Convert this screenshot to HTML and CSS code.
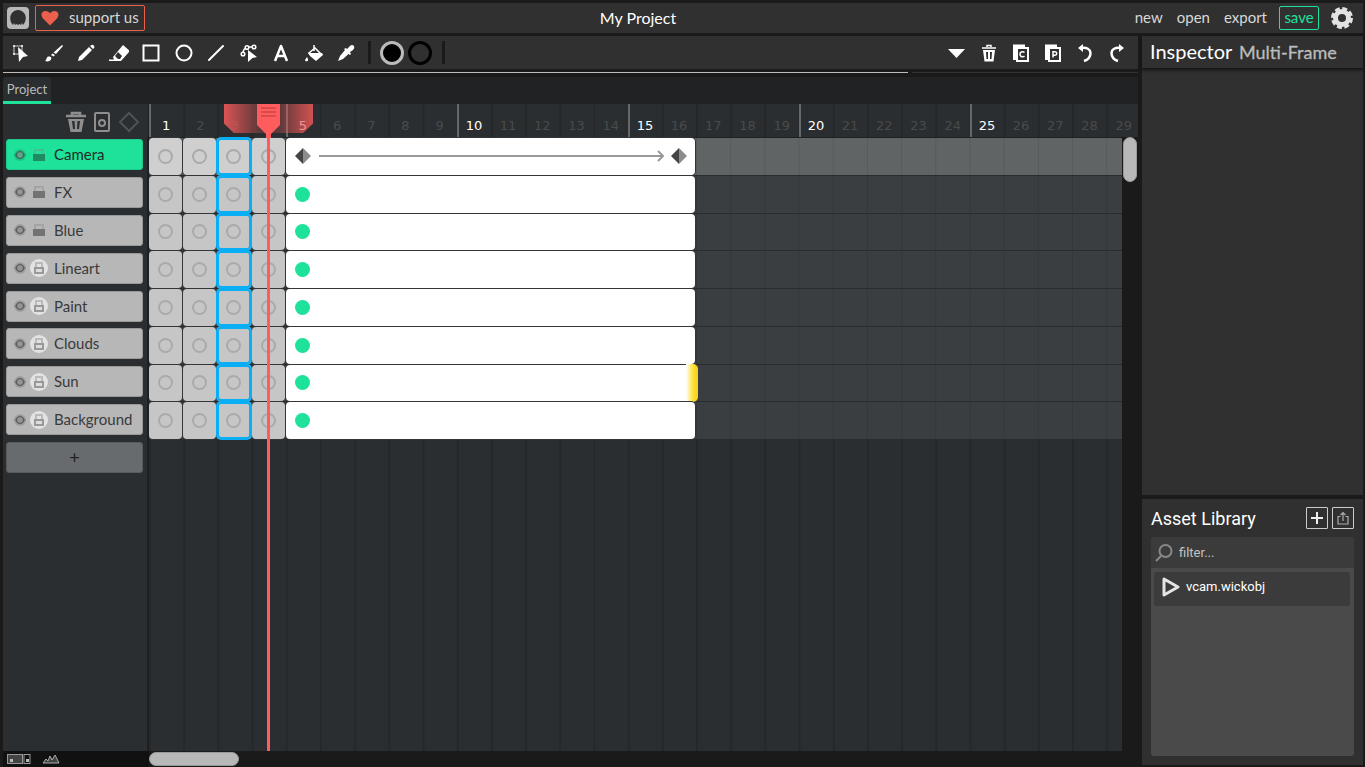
FILE: index.html
```html
<!DOCTYPE html>
<html lang="en">

<head>
  <meta charset="UTF-8">
  <title>My Project</title>
  <link rel="stylesheet" href="styles.css">
</head>

<body>

  <header class="menubar">
    <button class="logo" aria-label="about">
      <svg width="22" height="22" viewBox="0 0 22 22"><rect width="22" height="22" rx="4" fill="#b8b8b8"/><path d="M6 18C2 14 3 8 5 6C8 2 14 2 17 6C20 9 19 15 16 18L15 16L14 18L12.500 17L11 18L9.500 17L8 18L7 16Z" fill="#303030"/></svg>
    </button>
    <button class="support">
      <svg width="18" height="16" viewBox="0 0 18 16"><path d="M9 15.500L2 8.500C-1 4 1 1 4.500 1C7 1 8 2 9 3.500C10 2 11 1 13.500 1C17 1 19 4 16 8.500Z" fill="#ec5f4c"/></svg>
      <span>support us</span>
    </button>
    <h1 class="project-name">My Project</h1>
    <nav class="menu-right">
      <button>new</button>
      <button>open</button>
      <button>export</button>
      <button class="save">save</button>
      <button class="settings" aria-label="settings">
        <svg width="22" height="22" viewBox="0 0 22 22"><circle cx="11" cy="11" r="6.500" fill="none" stroke="#e2e2e2" stroke-width="5"/><circle cx="11" cy="11" r="9" fill="none" stroke="#e2e2e2" stroke-width="4" stroke-dasharray="4.700 2.370"/></svg>
      </button>
    </nav>
  </header>

  <div class="workspace">
    <main class="editor">

      <div class="toolbar">
        <div class="tools">
          <button aria-label="cursor"><svg viewBox="0 0 20 20"><path d="M3 3H11V11H3Z" fill="none" stroke="#999" stroke-width="1.500"/><path d="M2 2h2v2H2zM10 2h2v2h-2zM2 10h2v2H2z" fill="#ddd"/><path d="M7 4L17 13L12 14L8 19Z" fill="#fff"/></svg></button>
          <button aria-label="brush"><svg viewBox="0 0 20 20"><path d="M18 2L19 3L12 11L9.500 9.500ZM8.500 10.500L11 12L9.500 13.500L7 12ZM1 18C3 17 2 14 4.500 13.500C7 13 8 15 7 16.500C6 18.500 3 19 1 18Z" fill="#fff"/></svg></button>
          <button aria-label="pencil"><svg viewBox="0 0 20 20"><path d="M2 18L3 14L13 4L16 7L6 17ZM14 3L15.500 2Q17 1 18 3Q19 4 18 5L17 6Z" fill="#fff"/></svg></button>
          <button aria-label="eraser"><svg viewBox="0 0 20 20"><path d="M14 2L21 8L12 18H0V16.500H5L4 14ZM9 9L6 13L9 16H11L13 13Z" fill="#fff" fill-rule="evenodd"/></svg></button>
          <button aria-label="rectangle"><svg viewBox="0 0 20 20"><rect x="2.500" y="2.500" width="15" height="15" fill="none" stroke="#fff" stroke-width="2"/></svg></button>
          <button aria-label="ellipse"><svg viewBox="0 0 20 20"><circle cx="10" cy="10" r="7.500" fill="none" stroke="#fff" stroke-width="2"/></svg></button>
          <button aria-label="line"><svg viewBox="0 0 20 20"><path d="M3 17L17 3" stroke="#fff" stroke-width="2" stroke-linecap="round"/></svg></button>
          <button aria-label="path cursor"><svg viewBox="0 0 20 20"><path d="M4 11Q4 5 8 5M8 4H16" fill="none" stroke="#fff" stroke-width="1.500"/><g fill="#303030" stroke="#fff" stroke-width="1.500"><circle cx="4" cy="11" r="1.800"/><circle cx="8" cy="4.500" r="1.800"/><circle cx="15" cy="4" r="1.800"/></g><path d="M9 7L18 14L13.500 15L9 19Z" fill="#fff"/></svg></button>
          <button aria-label="text"><svg viewBox="0 0 20 20"><path d="M4 18L10 3L16 18M6 13H14" fill="none" stroke="#fff" stroke-width="2.500" stroke-linejoin="round"/></svg></button>
          <button aria-label="fill bucket"><svg viewBox="0 0 20 20"><path d="M10 2V8M11 5L17 11L12 16L5 10Z" fill="none" stroke="#fff" stroke-width="1.500"/><path d="M4 10L18 10L19 12L12 18L6 13ZM3 14Q5 17 3.500 18Q1 19 1 17Z" fill="#fff"/></svg></button>
          <button aria-label="eyedropper"><svg viewBox="0 0 20 20"><path d="M2 18L4 13L9 7L8 6L10 5L11 6L14 3Q16 1 18 3Q19 5 17 7L14 9L15 11L14 12L12.500 11L7 16Z" fill="#fff"/></svg></button>
        </div>
        <span class="divider"></span>
        <button class="swatch fill" aria-label="fill color"></button>
        <button class="swatch" aria-label="stroke color"></button>
        <span class="divider last"></span>
        <div class="actions">
          <button aria-label="more"><svg viewBox="0 0 20 20"><path d="M1 6H18L9.500 15Z" fill="#fff"/></svg></button>
          <button aria-label="delete"><svg viewBox="0 0 20 20"><path d="M3 5H17M8 4V2.500H12V4" fill="none" stroke="#fff" stroke-width="1.500"/><path d="M4 7H16L14.500 18.500H5.500ZM7 9L7.500 16H9V9ZM11 9V16H12.500L13 9Z" fill="#fff" fill-rule="evenodd"/></svg></button>
          <button aria-label="copy"><svg viewBox="0 0 20 20"><path d="M3.500 17V3H14" fill="none" stroke="#fff" stroke-width="3"/><rect x="6" y="5" width="11" height="13" fill="#303030" stroke="#fff" stroke-width="2"/><path d="M13.500 9.500A2.600 2.600 0 1 0 13.500 13" fill="none" stroke="#fff" stroke-width="1.500"/></svg></button>
          <button aria-label="paste"><svg viewBox="0 0 20 20"><path d="M3.500 17V3H14" fill="none" stroke="#fff" stroke-width="3"/><rect x="6" y="5" width="11" height="13" fill="#303030" stroke="#fff" stroke-width="2"/><path d="M10 14.500V8.700H12A1.500 1.500 0 0 1 12 12.200H10" fill="none" stroke="#fff" stroke-width="1.500"/></svg></button>
          <button aria-label="undo"><svg viewBox="0 0 20 20"><path d="M6 5Q15 4 15.500 10Q15.500 16 9 18" fill="none" stroke="#fff" stroke-width="2.500"/><path d="M3 5L8 1V9Z" fill="#fff"/></svg></button>
          <button aria-label="redo"><svg viewBox="0 0 20 20"><path d="M14 5Q5 4 4.500 10Q4.500 16 11 18" fill="none" stroke="#fff" stroke-width="2.500"/><path d="M17 5L12 1V9Z" fill="#fff"/></svg></button>
        </div>
      </div>

      <div class="resizer"><span></span><span></span></div>

      <section class="timeline">
        <div class="tabs"><button class="tab">Project</button></div>

        <div class="layer-tools">
          <button aria-label="delete layer"><svg width="20" height="22" viewBox="0 0 20 22"><path d="M0 5H20M6 4V2H14V4" fill="none" stroke="#8e8e8e" stroke-width="2.500"/><path d="M2 8H18L15.500 21H4.500ZM6 10L7 18H9L8.500 10ZM11.500 10L11 18H13L14 10Z" fill="#8e8e8e" fill-rule="evenodd"/></svg></button>
          <button aria-label="add frame"><svg width="18" height="22" viewBox="0 0 18 22"><rect x="2" y="2" width="14" height="18" rx="1" fill="none" stroke="#8e8e8e" stroke-width="2"/><circle cx="9" cy="12" r="3" fill="none" stroke="#8e8e8e" stroke-width="2"/></svg></button>
          <button aria-label="add tween"><svg width="22" height="22" viewBox="0 0 22 22"><path d="M11 2L20 11L11 20L2 11Z" fill="none" stroke="#505354" stroke-width="2"/></svg></button>
        </div>
        <div class="layers" id="layers"></div>

        <div class="viewport">
          <div class="sheet">
            <div class="ruler" id="ruler"></div>
            <div class="frames" id="frames"></div>
            <div class="onion"></div>
            <div class="playhead">
              <svg width="23" height="34" viewBox="0 0 23 34"><path d="M0 0H23V21L14 30V34H9V30L0 21Z" fill="#ff5d5d"/><path d="M4 4H19M4 8H19M4 12H19" stroke="#cc4646" stroke-width="1.500"/></svg>
            </div>
          </div>
        </div>
        <div class="vscroll"><span></span></div>

        <div class="view-modes">
          <button aria-label="frame size"><svg width="24" height="10" viewBox="0 0 24 10"><rect x="0.500" y="0.500" width="15" height="9" fill="#444" stroke="#999"/><rect x="17" y="0.500" width="6" height="9" fill="#111" stroke="#999"/><path d="M3 5h3v3H3zM19 5h3v3h-3z" fill="#bbb"/></svg></button>
          <button aria-label="waveforms"><svg width="18" height="10" viewBox="0 0 18 10"><path d="M1 9L4 5L6 7L8 2L10 6L13 1L17 9Z" fill="#444" stroke="#aaa"/></svg></button>
        </div>
        <div class="hscroll"><span></span></div>
      </section>
    </main>

    <aside class="sidebar">
      <section class="inspector">
        <h2>Inspector <span>Multi-Frame</span></h2>
      </section>
      <section class="assets">
        <div class="assets-head">
          <h2>Asset Library</h2>
          <button aria-label="add asset"><svg width="14" height="14" viewBox="0 0 14 14"><path d="M7 1V13M1 7H13" stroke="#eee" stroke-width="2"/></svg></button>
          <button aria-label="import asset"><svg width="12" height="14" viewBox="0 0 12 14"><path d="M3.500 5.500H1V13H11V5.500H8.500M6 10V2M3.500 4L6 1.500L8.500 4" fill="none" stroke="#aaa" stroke-width="1.200"/></svg></button>
        </div>
        <div class="asset-list">
          <label class="filter">
            <svg width="18" height="18" viewBox="0 0 18 18"><circle cx="10.500" cy="7" r="6" fill="none" stroke="#888" stroke-width="2"/><path d="M6 12L1 17" stroke="#888" stroke-width="2"/></svg>
            <input type="text" placeholder="filter..." aria-label="filter assets">
          </label>
          <button class="asset">
            <svg width="18" height="20" viewBox="0 0 18 20"><path d="M2 2L16 10L2 18Z" fill="none" stroke="#e4e4e4" stroke-width="3" stroke-linejoin="round"/></svg>
            <span>vcam.wickobj</span>
          </button>
        </div>
      </section>
    </aside>
  </div>

  <script src="script.js"></script>
</body>

</html>
```
FILE: styles.css
```css
*,
*::before {
  box-sizing: border-box;
}

body {
  margin: 0;
  padding: 3px 2px 0 3px;
  height: 100vh;
  display: flex;
  flex-direction: column;
  gap: 3px;
  overflow: hidden;
  background: #1a1a1a;
  color: #fff;
  font-family: Lato, sans-serif;
  font-size: 15px;
}

button {
  display: flex;
  align-items: center;
  justify-content: center;
  padding: 0;
  border: 0;
  background: none;
  color: inherit;
  font: inherit;
  cursor: pointer;
}

svg {
  flex: none;
}

h1,
h2 {
  margin: 0;
  font-weight: 400;
}

/* menu bar */
.menubar {
  flex: none;
  height: 30px;
  padding: 0 10px 0 4px;
  display: grid;
  grid-template-columns: 28px 1fr auto 1fr;
  align-items: center;
  background: #303030;
  color: #d8d8d8;
}

.logo {
  width: 22px;
}

.support {
  justify-self: start;
  height: 26px;
  padding: 0 5px;
  gap: 10px;
  border: 1px solid #ec5f4c;
  border-radius: 2px;
}

.support span,
.project-name,
.menu-right button {
  padding-bottom: 2px;
}

.project-name {
  color: #fff;
  font-size: 16px;
  margin-right: 112px;
}

.menu-right {
  display: flex;
  justify-content: flex-end;
  align-items: center;
  gap: 14px;
}

.menu-right .settings {
  padding: 0;
}

.save {
  height: 24px;
  width: 40px;
  margin: 0 -2px;
  border: 1px solid #1ee29a;
  border-radius: 2px;
  color: #1ee29a;
}

.workspace {
  flex: 1;
  min-height: 0;
  display: flex;
  gap: 4px;
}

.editor {
  flex: 1;
  min-width: 0;
  display: flex;
  flex-direction: column;
}

/* toolbar */
.toolbar {
  flex: none;
  height: 33px;
  padding: 0 11px 0 8px;
  display: flex;
  align-items: center;
  gap: 12px;
  background: #303030;
}

.toolbar svg {
  width: 20px;
  height: 20px;
}

.tools {
  width: 345px;
  display: flex;
  justify-content: space-between;
}

.divider {
  width: 3px;
  height: 23px;
  margin-right: -3px;
  background: #1a1a1a;
}

.swatch {
  width: 24px;
  height: 24px;
  margin-right: -8px;
  border: 3px solid #000;
  border-radius: 50%;
}

.divider.last {
  margin-left: 6px;
}

.swatch.fill {
  border-color: #bbb;
  background: #000;
}

.actions {
  margin-left: auto;
  display: flex;
  gap: 12px;
}

.resizer {
  flex: none;
  height: 8px;
  padding-top: 3px;
  display: grid;
  grid-template-columns: 4fr 1fr;
  gap: 4px;
}

.resizer span {
  height: 1px;
  background: #bcbcbc;
}

.resizer span + span {
  background: #333;
}

/* timeline */
.timeline {
  flex: 1;
  min-height: 0;
  display: grid;
  grid-template-columns: 146px minmax(0, 1fr) 16px;
  grid-template-rows: 27px 33px minmax(0, 1fr) 16px;
}

.tabs {
  grid-column: 1 / -1;
  background: #212223;
}

.tab {
  width: 48px;
  height: 27px;
  background: #2a2e30;
  border-bottom: 3px solid #1ee29a;
  border-radius: 4px 4px 0 0;
  color: #bbb;
  font-size: 13px;
}

.layer-tools {
  grid-column: 1;
  grid-row: 2;
  display: flex;
  justify-content: flex-end;
  align-items: center;
  gap: 7px;
  padding: 3px 8px 0 0;
  background: #2a2e30;
  border-right: 1px solid #1d1f20;
}

.layers {
  grid-column: 1;
  grid-row: 3;
  padding: 0 4px 0 3px;
  background: #2a2e30;
  border-right: 2px solid #1d1f20;
}

.layer-list {
  height: 341px;
  display: grid;
  grid-template-rows: repeat(9, minmax(0, 1fr));
}

.layer {
  height: 31px;
  margin-top: 2px;
  padding-left: 6px;
  gap: 3px;
  justify-content: flex-start;
  background: #b7b7b7;
  border: 1px solid #999;
  border-radius: 3px;
  color: #3a3a3a;
}

.layer.active {
  background: #1ee29a;
  border-color: #1ec98b;
  color: #1f2d28;
}

.layer span {
  margin-left: 3px;
  padding-bottom: 1px;
}

.layer.add {
  justify-content: center;
  padding: 0 0 2px;
  background: #686b6e;
  border-color: #585b5e;
  color: #222;
  font-size: 18px;
}

.viewport {
  grid-column: 2 / 4;
  grid-row: 2 / 4;
  overflow: hidden;
  background: #2a2e30;
}

/* 30 columns, five of them are 171px */
.sheet {
  position: relative;
  width: 1026px;
  height: 100%;
  background: linear-gradient(to right, #25282a 2px, transparent 2px);
  background-size: calc(100% / 30) 100%;
}

.ruler,
.row {
  display: grid;
  grid-template-columns: repeat(30, minmax(0, 1fr));
}

.ruler {
  height: 34px;
  border-bottom: 1px solid #1d1f20;
}

.ruler span {
  padding-top: 13px;
  text-align: center;
  color: #484b4c;
  font: 13px/18px "DejaVu Sans", sans-serif;
}

.ruler .major {
  color: #fff;
  box-shadow: inset 2px 0 #66696a;
}

.frames {
  height: 302px;
  display: grid;
  grid-template-rows: repeat(8, minmax(0, 1fr));
}

.row {
  min-height: 0;
  background: linear-gradient(to right, #34383a 1px, transparent 1px) 0 0 / calc(100% / 30) 100%, #3a3e40;
  border-bottom: 1px solid #292c2e;
}

.row.active {
  background: linear-gradient(to right, #575a5b 1px, transparent 1px) 0 0 / calc(100% / 30) 100%, #606464;
}

.frame {
  position: relative;
  display: flex;
  align-items: center;
  justify-content: center;
  margin-right: 1px;
  border-radius: 4px;
  background: #c6c6c6;
  box-shadow: 0 0 0 1px #333638;
}

.active .frame {
  background: #cecfce;
}

.frame::before {
  content: "";
  width: 15px;
  height: 15px;
  border: 2px solid #aaa;
  border-radius: 50%;
}

.frame.selected {
  z-index: 1;
  box-shadow: 0 0 0 1px #09aef4, inset 0 0 0 2px #09aef4;
}

.row .frame.filled {
  grid-column: span 12;
  justify-content: flex-start;
  padding-left: 9px;
  background: #fff;
}

.frame.filled::before {
  border: 0;
  background: #1ee29a;
}

.frame.tween::before {
  display: none;
}

.frame.tween {
  justify-content: space-between;
  padding-right: 8px;
}

.tween i {
  flex: 1;
  height: 2px;
  margin: 0 -6px 0 8px;
  background: #999;
}

.tween .head {
  margin-right: 7px;
}

.frame.stretch::after {
  content: "";
  position: absolute;
  top: -1px;
  right: -3px;
  bottom: -1px;
  width: 12px;
  border-radius: 0 5px 5px 0;
  background: linear-gradient(to right, #fff, #ffe02e 60%, #f2cd22);
}

.onion {
  position: absolute;
  top: 0;
  left: 75px;
  width: 89px;
  height: 29px;
  background: linear-gradient(to right, #f05858e6, #f0585840 40%, #f0585840 62%, #f05858d9);
  clip-path: polygon(0 0, 100% 0, 100% 67%, 89% 100%, 11% 100%, 0 67%);
}

.playhead {
  position: absolute;
  top: 0;
  left: 108px;
  width: 23px;
  height: 100%;
  z-index: 2;
  background: linear-gradient(#ff5d5d, #ff5d5d) center / 3px 100% no-repeat;
}

/* the ruler runs on above the scroll bar */
.vscroll {
  grid-row: 3 / 5;
  grid-column: 3;
  z-index: 3;
  padding: 0 1px;
  background: #1a1a1a;
}

.vscroll span,
.hscroll span {
  display: block;
  border: 1px solid #999;
  border-radius: 7px;
  background: #b8b8b8;
}

.vscroll span {
  width: 14px;
  height: 45px;
}

.view-modes {
  grid-column: 1;
  grid-row: 4;
  display: flex;
  align-items: center;
  gap: 11px;
  padding-left: 4px;
  background: #111;
}

.hscroll {
  grid-column: 2;
  grid-row: 4;
  padding-top: 1px;
}

.hscroll span {
  width: 90px;
  height: 14px;
}

/* right column */
.sidebar {
  flex: none;
  width: 221px;
  display: flex;
  flex-direction: column;
  gap: 4px;
  padding-bottom: 2px;
  font-size: 13px;
}

.inspector {
  flex: 1;
  background: #303030;
}

.inspector h2 {
  height: 32px;
  padding-left: 8px;
  font-size: 20px;
  line-height: 30px;
  box-shadow: 0 2px 3px #111;
}

.inspector h2 span {
  margin-left: 2px;
  color: #bbb;
  font-size: 18px;
  -webkit-text-stroke: 0.3px #bbb;
}

.assets {
  height: 266px;
  padding: 8px 9px 9px;
  display: flex;
  flex-direction: column;
  gap: 8px;
  background: #303030;
  font-family: Roboto, sans-serif;
}

.assets-head {
  display: flex;
  gap: 4px;
  height: 22px;
}

.assets-head h2 {
  margin-right: auto;
  font-size: 18px;
  line-height: 24px;
}

.assets-head button {
  width: 22px;
  border: 1px solid #ccc;
  border-radius: 1px;
}

.asset-list {
  flex: 1;
  border-radius: 3px;
  background: #4a4a4a;
  overflow: hidden;
}

.filter {
  display: flex;
  align-items: center;
  gap: 6px;
  height: 31px;
  padding-left: 4px;
  background: #3b3b3b;
}

.filter input {
  flex: 1;
  min-width: 0;
  padding: 0;
  border: 0;
  outline: 0;
  background: none;
  color: #fff;
  font: inherit;
}

.filter input::placeholder {
  color: #c4c4c4;
}

.asset {
  width: calc(100% - 7px);
  height: 34px;
  margin: 4px 3px;
  padding: 0 8px 5px;
  justify-content: flex-start;
  gap: 6px;
  border-radius: 3px;
  background: #3b3b3b;
}
```
FILE: script.js
```js
const layers = [
  { name: 'Camera', locked: false, active: true, tween: true },
  { name: 'FX', locked: false },
  { name: 'Blue', locked: false },
  { name: 'Lineart', locked: true },
  { name: 'Paint', locked: true },
  { name: 'Clouds', locked: true },
  { name: 'Sun', locked: true, stretch: true },
  { name: 'Background', locked: true }
];

const eye = `<svg width="14" height="14" viewBox="0 0 14 14"><circle cx="7" cy="7" r="6" fill="#000" opacity=".12"/><path d="M1 7Q7 0 13 7Q7 14 1 7Z" fill="#000" opacity=".2"/><circle cx="7" cy="7" r="3.500" fill="#aaa" fill-opacity=".5" stroke="#444" stroke-opacity=".6" stroke-width="1.500"/></svg>`;
const unlocked = `<svg width="18" height="18" viewBox="0 0 18 18"><path d="M5 8V4H13V8" fill="none" stroke="#888" stroke-opacity=".4" stroke-width="2"/><rect x="3" y="8" width="12" height="7" fill="#222" fill-opacity=".45"/></svg>`;
const locked = `<svg width="18" height="18" viewBox="0 0 18 18"><circle cx="9" cy="9" r="9" fill="#e2e2e2"/><path d="M6 8V4H12V8" fill="none" stroke="#bbb" stroke-width="2"/><rect x="5" y="9" width="8" height="5" fill="#ddd" stroke="#999" stroke-width="2"/></svg>`;
const diamond = `<svg width="16" height="16" viewBox="0 0 16 16"><path d="M8 0L0 8L8 16Z" fill="#444"/><path d="M8 0L16 8L8 16Z" fill="#8c8c8c"/></svg>`;
const arrow = `<svg class="head" width="8" height="12" viewBox="0 0 8 12"><path d="M2 1L7 6L2 11" fill="none" stroke="#999" stroke-width="2"/></svg>`;

let ruler = '';
for (let n = 1; n <= 29; n++) {
  const major = n === 1 || n % 5 === 0;
  ruler += `<span class="${major ? 'major' : ''}">${n}</span>`;
}
document.getElementById('ruler').innerHTML = ruler;

let list = '';
let rows = '';
for (const layer of layers) {
  const active = layer.active ? 'active' : '';
  list += `<button class="layer ${active}">${eye}${layer.locked ? locked : unlocked}<span>${layer.name}</span></button>`;

  rows += `<div class="row ${active}">
    <div class="frame"></div><div class="frame"></div><div class="frame selected"></div><div class="frame"></div>
    <div class="frame filled ${layer.tween ? 'tween' : ''} ${layer.stretch ? 'stretch' : ''}">${layer.tween ? diamond + '<i></i>' + arrow + diamond : ''}</div>
  </div>`;
}
list += '<button class="layer add" aria-label="add layer">+</button>';
document.getElementById('layers').innerHTML = `<div class="layer-list">${list}</div>`;
document.getElementById('frames').innerHTML = rows;
```
